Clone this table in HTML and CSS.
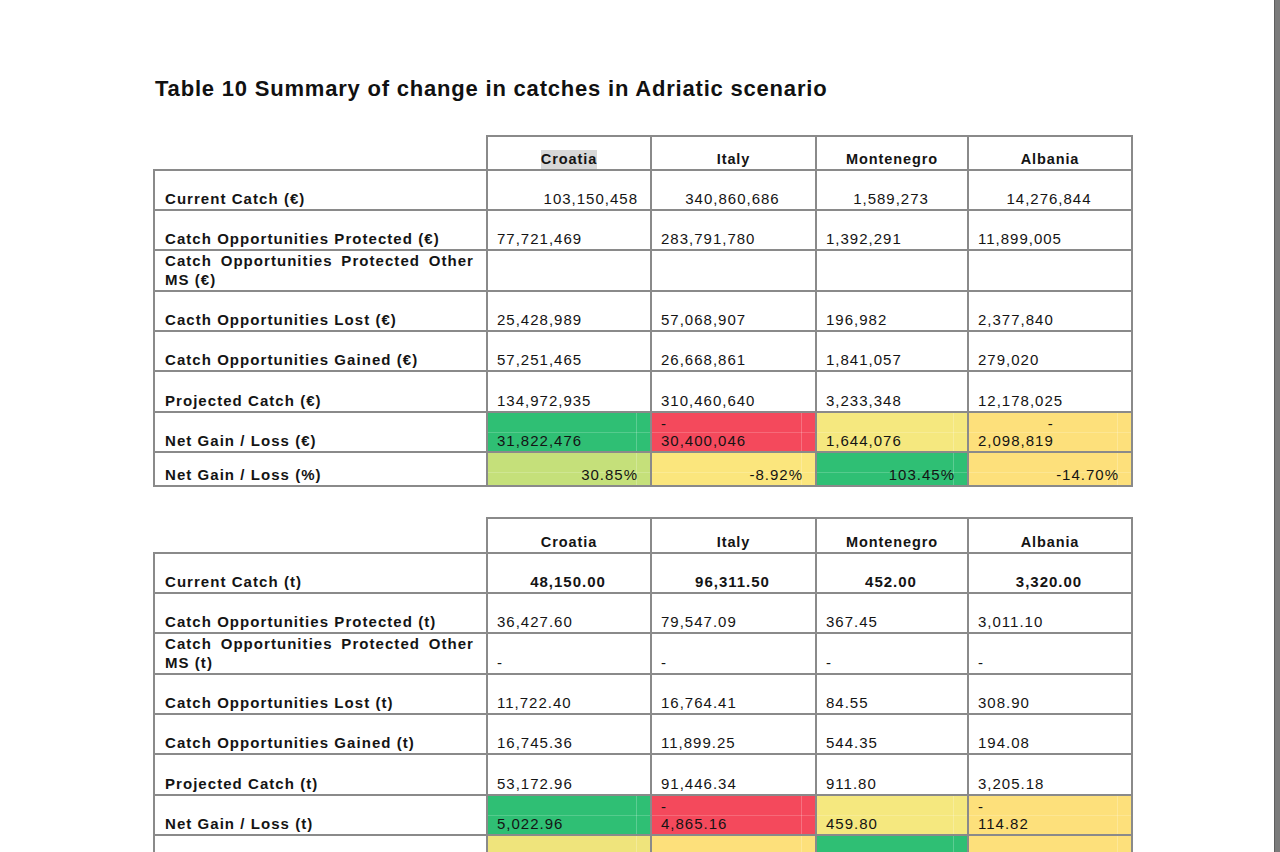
FILE: index.html
```html
<!DOCTYPE html>
<html>
<head>
<meta charset="utf-8">
<title>Table 10 Summary of change in catches in Adriatic scenario</title>
<link rel="stylesheet" href="styles.css">
</head>
<body>
<div class="page">
  <h1 class="title">Table 10 Summary of change in catches in Adriatic scenario</h1>

  <table class="grid first">
    <colgroup>
      <col class="c-label"><col class="c-hr"><col class="c-it"><col class="c-me"><col class="c-al">
    </colgroup>
    <tr class="hdr">
      <td class="blank"></td>
      <th><span class="sel">Croatia</span></th>
      <th>Italy</th>
      <th>Montenegro</th>
      <th>Albania</th>
    </tr>
    <tr>
      <td class="label">Current Catch (€)</td>
      <td class="num right">103,150,458</td>
      <td class="num center">340,860,686</td>
      <td class="num center">1,589,273</td>
      <td class="num center">14,276,844</td>
    </tr>
    <tr>
      <td class="label">Catch Opportunities Protected (€)</td>
      <td class="num">77,721,469</td>
      <td class="num">283,791,780</td>
      <td class="num">1,392,291</td>
      <td class="num">11,899,005</td>
    </tr>
    <tr class="tall">
      <td class="label just">Catch Opportunities Protected Other MS (€)</td>
      <td class="num"></td>
      <td class="num"></td>
      <td class="num"></td>
      <td class="num"></td>
    </tr>
    <tr>
      <td class="label">Cacth Opportunities Lost (€)</td>
      <td class="num">25,428,989</td>
      <td class="num">57,068,907</td>
      <td class="num">196,982</td>
      <td class="num">2,377,840</td>
    </tr>
    <tr>
      <td class="label">Catch Opportunities Gained (€)</td>
      <td class="num">57,251,465</td>
      <td class="num">26,668,861</td>
      <td class="num">1,841,057</td>
      <td class="num">279,020</td>
    </tr>
    <tr class="tall">
      <td class="label">Projected Catch (€)</td>
      <td class="num">134,972,935</td>
      <td class="num">310,460,640</td>
      <td class="num">3,233,348</td>
      <td class="num">12,178,025</td>
    </tr>
    <tr>
      <td class="label">Net Gain / Loss (€)</td>
      <td class="num green cellgrid">31,822,476</td>
      <td class="num red cellgrid"><span class="dash">-</span>30,400,046</td>
      <td class="num yellow cellgrid">1,644,076</td>
      <td class="num amber cellgrid"><span class="negwrap"><span class="dash dash-r">-</span>2,098,819</span></td>
    </tr>
    <tr class="short">
      <td class="label">Net Gain / Loss (%)</td>
      <td class="num right lime cellgrid">30.85%</td>
      <td class="num right yellow2 cellgrid">-8.92%</td>
      <td class="num right green cellgrid">103.45%</td>
      <td class="num right amber cellgrid">-14.70%</td>
    </tr>
  </table>

  <table class="grid second">
    <colgroup>
      <col class="c-label"><col class="c-hr"><col class="c-it"><col class="c-me"><col class="c-al">
    </colgroup>
    <tr class="hdr hdr2">
      <td class="blank"></td>
      <th>Croatia</th>
      <th>Italy</th>
      <th>Montenegro</th>
      <th>Albania</th>
    </tr>
    <tr>
      <td class="label">Current Catch (t)</td>
      <td class="num center bold">48,150.00</td>
      <td class="num center bold">96,311.50</td>
      <td class="num center bold">452.00</td>
      <td class="num center bold">3,320.00</td>
    </tr>
    <tr>
      <td class="label">Catch Opportunities Protected (t)</td>
      <td class="num">36,427.60</td>
      <td class="num">79,547.09</td>
      <td class="num">367.45</td>
      <td class="num">3,011.10</td>
    </tr>
    <tr>
      <td class="label just">Catch Opportunities Protected Other MS (t)</td>
      <td class="num">-</td>
      <td class="num">-</td>
      <td class="num">-</td>
      <td class="num">-</td>
    </tr>
    <tr>
      <td class="label">Catch Opportunities Lost (t)</td>
      <td class="num">11,722.40</td>
      <td class="num">16,764.41</td>
      <td class="num">84.55</td>
      <td class="num">308.90</td>
    </tr>
    <tr>
      <td class="label">Catch Opportunities Gained (t)</td>
      <td class="num">16,745.36</td>
      <td class="num">11,899.25</td>
      <td class="num">544.35</td>
      <td class="num">194.08</td>
    </tr>
    <tr class="tall">
      <td class="label">Projected Catch (t)</td>
      <td class="num">53,172.96</td>
      <td class="num">91,446.34</td>
      <td class="num">911.80</td>
      <td class="num">3,205.18</td>
    </tr>
    <tr>
      <td class="label">Net Gain / Loss (t)</td>
      <td class="num green cellgrid">5,022.96</td>
      <td class="num red cellgrid"><span class="dash">-</span>4,865.16</td>
      <td class="num yellow cellgrid">459.80</td>
      <td class="num amber cellgrid"><span class="dash">-</span>114.82</td>
    </tr>
    <tr class="short">
      <td class="label"></td>
      <td class="num right yellow3 cellgrid"></td>
      <td class="num right amber cellgrid"></td>
      <td class="num right green cellgrid"></td>
      <td class="num right amber cellgrid"></td>
    </tr>
  </table>
</div>
<div class="edge"></div>
</body>
</html>
```

FILE: styles.css
```css
html, body {
  margin: 0;
  padding: 0;
  height: 100%;
  overflow: hidden;
  background: #ffffff;
}

body {
  display: flex;
  font-family: "Liberation Sans", Arial, Helvetica, sans-serif;
  color: #141414;
}

.page {
  flex: 1;
  padding: 75px 0 0 153px;
}

.edge {
  width: 5px;
  background: #7b7b7b;
  border-left: 1px solid #5e5e5e;
}

.title {
  margin: 0 0 33px 2px;
  font-size: 22px;
  font-weight: bold;
  line-height: 27px;
  letter-spacing: 0.8px;
  color: #111111;
}

.grid {
  border-collapse: collapse;
  table-layout: fixed;
  width: 978px;
  font-size: 15px;
  letter-spacing: 1px;
}

.grid.second {
  margin-top: 30px;
}

.c-label { width: 333px; }
.c-hr { width: 164px; }
.c-it { width: 165px; }
.c-me { width: 152px; }
.c-al { width: 164px; }

.grid td,
.grid th {
  border: 2px solid #8a8a8a;
  padding: 0 11px 1px 9px;
  vertical-align: bottom;
  line-height: 18px;
  height: 40px;
  box-sizing: border-box;
}

.grid tr.tall td {
  height: 41px;
}

.grid tr.hdr th,
.grid tr.hdr td {
  height: 34px;
}

.grid tr.hdr2 th,
.grid tr.hdr2 td {
  height: 35px;
}

.grid tr.short td {
  height: 34px;
}

.grid td.blank {
  border-top: none;
  border-left: none;
}

.grid th {
  font-weight: bold;
  text-align: center;
  padding: 0 10px 1px;
  font-size: 14.5px;
  letter-spacing: 0.9px;
}

.sel {
  background: #d8d8d8;
  padding: 1px 0 2px;
}

.grid td.label {
  font-weight: bold;
  text-align: left;
  letter-spacing: 1.05px;
  padding-left: 10px;
}

.grid td.label.just {
  text-align: justify;
  line-height: 19px;
  padding-right: 12px;
}

.num {
  text-align: left;
}

.grid td.num.right { text-align: right; padding-right: 12px; }
.grid td.num.center { text-align: center; }
.num.bold { font-weight: bold; }

.dash {
  display: block;
  line-height: 16px;
}

.negwrap {
  display: inline-block;
}

.dash-r {
  text-align: right;
}

.green { background-color: #2fbf74; }
.red { background-color: #f4495c; }
.yellow { background-color: #f5e87f; }
.yellow2 { background-color: #fbe67d; }
.yellow3 { background-color: #efe47c; }
.amber { background-color: #fde07b; }
.lime { background-color: #c5e07a; }

.cellgrid {
  background-image:
    linear-gradient(to right, transparent calc(100% - 14px), rgba(255, 255, 255, 0.22) calc(100% - 14px), rgba(255, 255, 255, 0.22) calc(100% - 13px), transparent calc(100% - 13px)),
    linear-gradient(to bottom, transparent 19px, rgba(255, 255, 255, 0.18) 19px, rgba(255, 255, 255, 0.18) 20px, transparent 20px);
}
```
